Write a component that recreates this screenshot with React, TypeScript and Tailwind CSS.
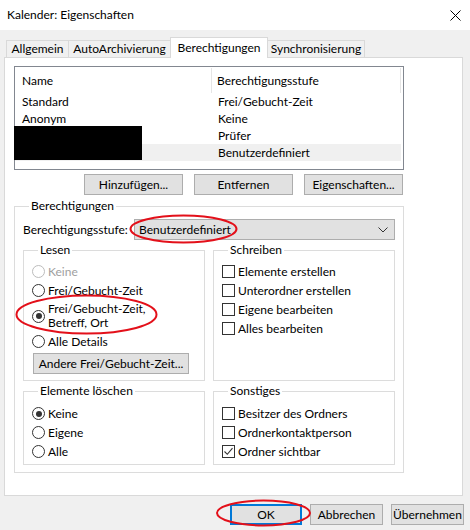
import React from "react";

function Radio({ label, checked, disabled }: { label: React.ReactNode; checked?: boolean; disabled?: boolean }) {
  return (
    <div className="flex items-center min-h-[19px]">
      <span
        className={`flex h-[13px] w-[13px] shrink-0 items-center justify-center rounded-full border bg-white ${
          disabled ? "border-[#bcbcbc]" : "border-[#333333]"
        }`}
      >
        {checked && <span className="h-[6px] w-[6px] rounded-full bg-[#333333]" />}
      </span>
      <span className={`ml-[3px] ${disabled ? "text-[#a0a0a0]" : ""}`}>{label}</span>
    </div>
  );
}

function Check({ label, checked }: { label: string; checked?: boolean }) {
  return (
    <div className="flex h-[19px] items-center">
      <span className="flex h-[13px] w-[13px] shrink-0 items-center justify-center border border-[#333333] bg-white">
        {checked && (
          <svg width="11" height="11" viewBox="0 0 11 11">
            <path d="M1.5 5.5 L4.3 8.3 L9.5 2.2" fill="none" stroke="#333333" strokeWidth="1.1" />
          </svg>
        )}
      </span>
      <span className="ml-[3px]">{label}</span>
    </div>
  );
}

function Btn({ children, className = "" }: { children: React.ReactNode; className?: string }) {
  return (
    <div className={`flex h-[21px] items-center justify-center border border-[#adadad] bg-[#e1e1e1] ${className}`}>
      {children}
    </div>
  );
}

function Group({ title, className = "", children }: { title: string; className?: string; children: React.ReactNode }) {
  return (
    <fieldset className={`border border-[#dcdcdc] ${className}`}>
      <legend className="ml-[6px] px-[2px] leading-[16px]">{title}</legend>
      {children}
    </fieldset>
  );
}

const rows = [
  ["Standard", "Frei/Gebucht-Zeit"],
  ["Anonym", "Keine"],
  ["", "Prüfer"],
  ["", "Benutzerdefiniert"],
];

export default function App() {
  return (
    <div className="relative h-[530px] w-[470px] overflow-hidden bg-[#f0f0f0] font-['Lato',sans-serif] text-[12px] text-black">
      {/* title bar */}
      <div className="flex h-[30px] items-center justify-between bg-white pl-[7px] pr-[9px]">
        <span>Kalender: Eigenschaften</span>
        <svg width="11" height="11" viewBox="0 0 11 11">
          <path d="M0.5 0.5 L10.5 10.5 M10.5 0.5 L0.5 10.5" stroke="#000" strokeWidth="1" />
        </svg>
      </div>

      {/* tabs */}
      <div className="flex h-[27px] items-end pl-[6px]">
        <div className="flex h-[17px] w-[62px] items-center justify-center border-l border-t border-[#d9d9d9]">Allgemein</div>
        <div className="flex h-[17px] w-[102px] items-center justify-center border-l border-t border-[#d9d9d9]">AutoArchivierung</div>
        <div className="relative z-10 -mb-px flex h-[21px] w-[98px] items-start justify-center border-l border-r border-t border-[#d9d9d9] bg-white pt-[1px]">
          Berechtigungen
        </div>
        <div className="flex h-[17px] w-[97px] items-center justify-center border-r border-t border-[#d9d9d9]">Synchronisierung</div>
      </div>

      {/* panel */}
      <div className="ml-[4px] h-[439px] w-[459px] border border-[#d9d9d9] bg-white px-[9px] pt-[8px]">
        <div className="relative h-[104px] w-[390px] border border-[#828790]">
          <div className="flex h-[26px] items-center pt-[1px]">
            <div className="flex h-full w-[197px] items-center border-r border-[#e5e5e5] pl-[7px]">Name</div>
            <div className="flex h-full w-[189px] items-center border-r border-[#e5e5e5] pl-[5px]">Berechtigungsstufe</div>
          </div>
          {rows.map(([n, p], i) => (
            <div key={i} className={`flex h-[17px] w-[386px] items-center ${i === 3 ? "bg-[#f0f0f0]" : ""}`}>
              <div className="w-[197px] pl-[7px]">{n}</div>
              <div className="pl-[6px]">{p}</div>
            </div>
          ))}
          <div className="absolute left-[-1px] top-[59px] h-[34px] w-[128px] bg-black" />
        </div>

        <div className="mt-[4px] flex w-[389px] justify-end gap-[11px]">
          <Btn className="w-[99px]">Hinzufügen...</Btn>
          <Btn className="w-[99px]">Entfernen</Btn>
          <Btn className="w-[99px]">Eigenschaften...</Btn>
        </div>

        <Group title="Berechtigungen" className="mt-[3px] w-[390px] px-[8px] pb-[7px]">
          <div className="mt-[5px] flex h-[21px] items-center">
            <span className="w-[111px] shrink-0">Berechtigungsstufe:</span>
            <div className="flex h-[21px] w-[261px] items-center justify-between border border-[#adadad] bg-[#e1e1e1] pl-[4px] pr-[6px]">
              <span>Benutzerdefiniert</span>
              <svg width="10" height="6" viewBox="0 0 10 6">
                <path d="M0.5 0.5 L5 5 L9.5 0.5" fill="none" stroke="#333" strokeWidth="1" />
              </svg>
            </div>
          </div>

          <div className="mt-[2px] grid grid-cols-[182px_182px] gap-[8px]">
            <Group title="Lesen" className="h-[139px] px-[8px]">
              <div className="mt-[4px]">
                <Radio label="Keine" disabled />
                <Radio label="Frei/Gebucht-Zeit" />
                <div className="flex h-[32px] items-center">
                  <span className="flex h-[13px] w-[13px] shrink-0 items-center justify-center rounded-full border border-[#333333] bg-white">
                    <span className="h-[6px] w-[6px] rounded-full bg-[#333333]" />
                  </span>
                  <div className="ml-[3px] flex flex-col">
                    <span className="h-[14px] leading-[14px]">Frei/Gebucht-Zeit,</span>
                    <span className="h-[14px] leading-[14px]">Betreff, Ort</span>
                  </div>
                </div>
                <Radio label="Alle Details" />
              </div>
              <Btn className="ml-[1px] mt-[2px] w-[156px]">Andere Frei/Gebucht-Zeit...</Btn>
            </Group>
            <Group title="Schreiben" className="h-[139px] px-[8px]">
              <div className="mt-[4px]">
                <Check label="Elemente erstellen" />
                <Check label="Unterordner erstellen" />
                <Check label="Eigene bearbeiten" />
                <Check label="Alles bearbeiten" />
              </div>
            </Group>
          </div>

          <div className="mt-[2px] grid grid-cols-[182px_182px] gap-[8px]">
            <Group title="Elemente löschen" className="h-[82px] px-[8px]">
              <div className="mt-[5px]">
                <Radio label="Keine" checked />
                <Radio label="Eigene" />
                <Radio label="Alle" />
              </div>
            </Group>
            <Group title="Sonstiges" className="h-[82px] px-[8px]">
              <div className="mt-[5px]">
                <Check label="Besitzer des Ordners" />
                <Check label="Ordnerkontaktperson" />
                <Check label="Ordner sichtbar" checked />
              </div>
            </Group>
          </div>
        </Group>
      </div>

      {/* dialog buttons */}
      <div className="mt-[8px] flex justify-end gap-[8px] pr-[6px]">
        <div className="flex h-[21px] w-[72px] items-center justify-center border-2 border-[#0078d7] bg-[#e1e1e1]">OK</div>
        <Btn className="w-[73px]">Abbrechen</Btn>
        <Btn className="w-[73px]">Übernehmen</Btn>
      </div>

      {/* red annotation ellipses */}
      <svg className="pointer-events-none absolute left-0 top-0" width="470" height="530">
        <g fill="none" stroke="#e3101a" strokeWidth="2">
          <ellipse cx="183.5" cy="229" rx="53" ry="13.5" />
          <ellipse cx="86.5" cy="314.5" rx="70" ry="19" />
          <ellipse cx="263.5" cy="513" rx="46.5" ry="12.5" />
        </g>
      </svg>
    </div>
  );
}
